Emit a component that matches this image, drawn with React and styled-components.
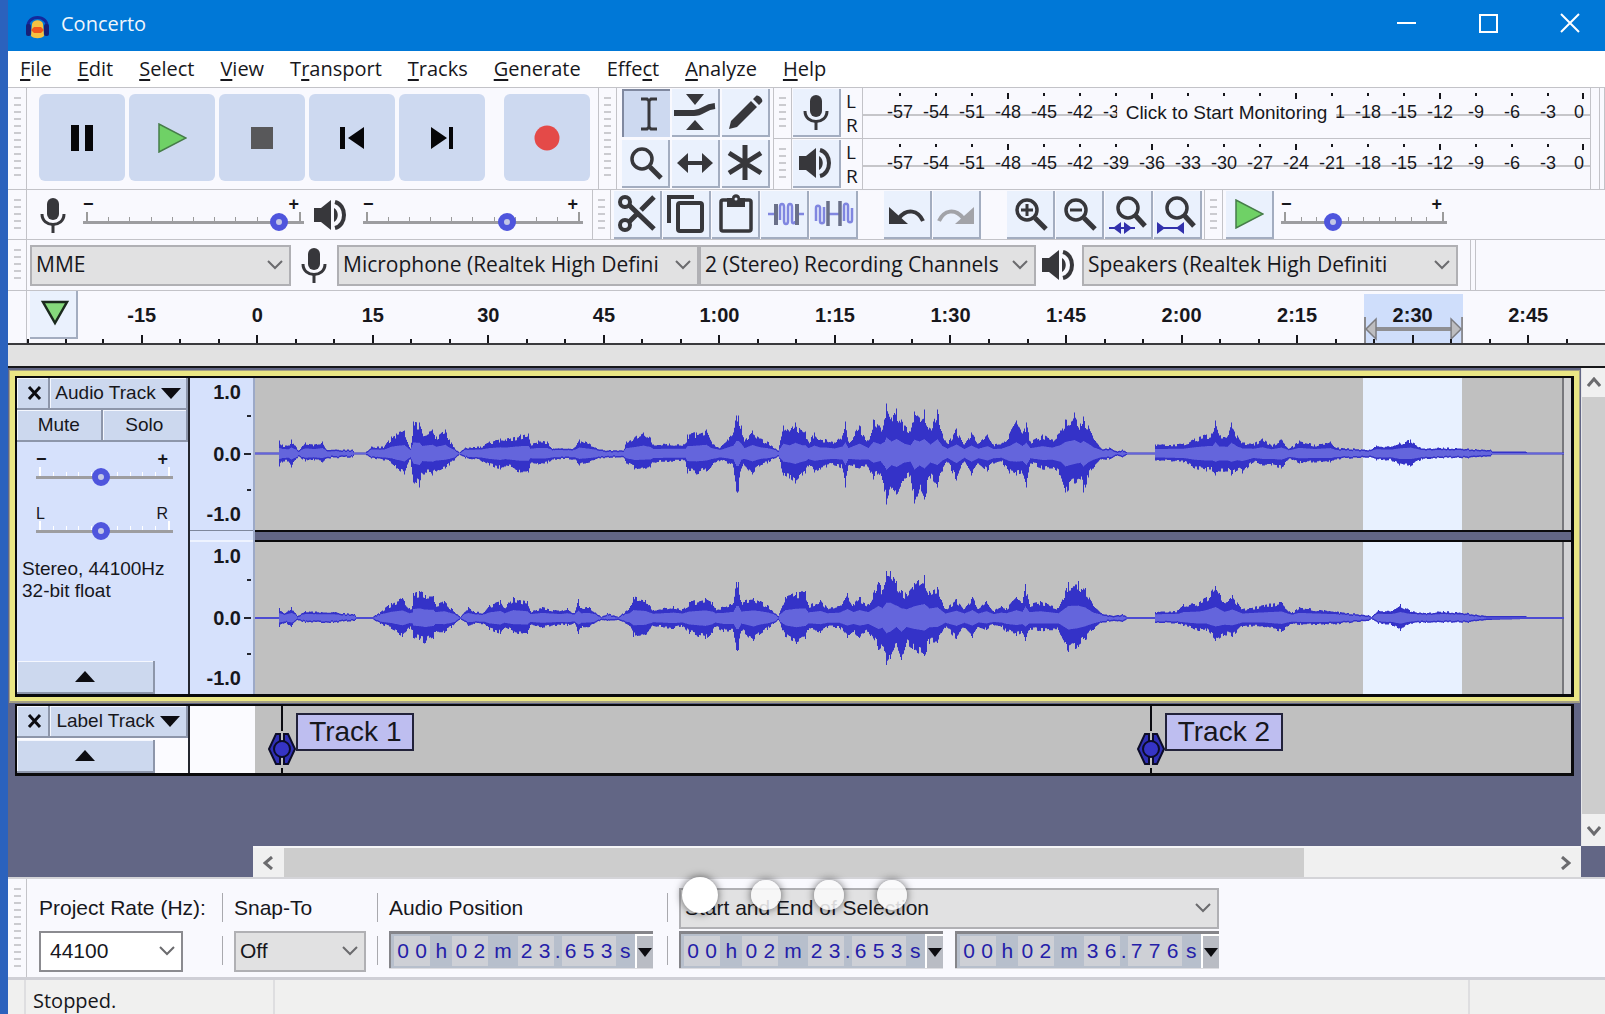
import React from 'react';
import styled, { createGlobalStyle, css } from 'styled-components';

const GlobalStyle = createGlobalStyle`
  * {
    box-sizing: border-box;
  }
  body {
    margin: 0;
    font-family: "Open Sans", "Noto Sans", sans-serif;
    font-size: 20px;
    color: #17171c;
  }
  button, select, input {
    margin: 0;
    font: inherit;
    color: inherit;
  }
`;

const arial = '"Liberation Sans", Arial, sans-serif';
const line = '#c3c3c8';
const ink = '#37373b';

/* ---------- window frame ---------- */

const Window = styled.div`
  display: flex;
  flex-direction: column;
  min-height: 100vh;
  overflow: hidden;
  border-left: 8px solid #2b62bd;
  background: #f9f9fe;
`;

const TitleBar = styled.header`
  display: flex;
  align-items: center;
  height: 51px;
  padding-left: 16px;
  background: #0078d7;
  color: #f0f6fc;
`;

const Title = styled.h1`
  flex: 1;
  margin: 0 0 4px 10px;
  font-size: 20px;
  font-weight: 400;
`;

const WindowButton = styled.button`
  width: 70px;
  height: 44px;
  margin-left: 12px;
  padding: 0;
  border: none;
  background: none;
`;

const MenuBar = styled.nav`
  display: flex;
  align-items: center;
  gap: 26px;
  height: 36px;
  padding-left: 12px;
  background: #fff;
`;

const MenuLink = styled.a`
  color: inherit;
  text-decoration: none;
  line-height: 32px;

  u {
    text-underline-offset: 3px;
  }
`;

/* ---------- toolbars ---------- */

const ToolbarRow = styled.div`
  display: flex;
  align-items: stretch;
  min-height: ${(props) => props.$height}px;
  border-top: 1px solid ${line};
`;

const Grip = styled.div`
  flex: none;
  display: flex;
  justify-content: center;
  width: 19px;
  padding: 9px 0;
  border-right: 1px solid ${line};
  border-left: ${(props) => (props.$edge ? '0' : `1px solid ${line}`)};

  &::before {
    content: "";
    width: 7px;
    background: repeating-linear-gradient(#cbcbd0 0 2px, transparent 2px 7px);
  }
`;

const Transport = styled.div`
  display: flex;
  align-items: center;
  gap: 4px;
  padding: 0 8px 2px 12px;
`;

const TransportButton = styled.button`
  display: grid;
  place-items: center;
  width: 86px;
  height: 87px;
  margin-left: ${(props) => (props.$apart ? '15px' : '0')};
  padding: 0;
  border: none;
  border-radius: 6px;
  background: #cdd9f0;
`;

const ToolGrid = styled.div`
  display: grid;
  grid-template-columns: repeat(3, 48px);
  align-content: center;
  gap: 3px 2px;
  padding: 0 3px 0 5px;
`;

const ToolButton = styled.button`
  flex: none;
  display: grid;
  place-items: center;
  width: 48px;
  height: 48px;
  padding: 0;
  border: 0 solid #a3adc0;
  border-width: 0 2px 2px 0;
  background: #eaf1fd;

  ${(props) =>
    props.$active &&
    css`
      border-color: #8089a0;
      border-width: 2px 0 0 2px;
      background: #cdd9f0;
    `}
`;

const Meters = styled.div`
  flex: 1;
  display: flex;
  flex-direction: column;
`;

const MeterRow = styled.div`
  flex: 1;
  display: flex;
  align-items: stretch;

  & + & {
    border-top: 1px solid ${line};
  }
  > ${ToolButton} {
    align-self: center;
    margin-left: 1px;
  }
`;

const Channels = styled.div`
  display: flex;
  flex-direction: column;
  justify-content: center;
  width: 21px;
  padding-left: 5px;
  font-size: 19px;
  line-height: 24px;
`;

const MeterBox = styled.button`
  position: relative;
  flex: 1;
  display: flex;
  align-items: flex-start;
  padding: 5px 6px 0 19px;
  border: 0 solid ${line};
  border-width: 0 1px;
  background: linear-gradient(#c6c6ca, #c6c6ca) center 26px / 100% 2px no-repeat;
  font-family: ${arial};
  font-size: 18px;
  line-height: 20px;
`;

const MeterMark = styled.span`
  flex: 2 0 0;
  display: flex;
  flex-direction: column;
  align-items: center;
  min-width: 0;

  &:last-child {
    flex: 1 0 0;
    align-items: flex-end;
  }

  &::before {
    content: "";
    width: 2px;
    height: ${(props) => (props.$major ? '6px' : '3px')};
    margin-bottom: ${(props) => (props.$major ? '3px' : '6px')};
    background: #17171c;
  }
`;

const MeterHint = styled.span`
  position: absolute;
  top: 12px;
  left: 50%;
  transform: translateX(-50%);
  padding: 3px 9px;
  background: #f9f9fe;
  font-size: 19px;
  white-space: nowrap;
`;

const RowEnd = styled.div`
  align-self: stretch;
  width: 6px;
  margin-left: ${(props) => props.$gap}px;
  border: 0 solid ${line};
  border-width: 0 1px;
`;

const MixerBar = styled.div`
  display: flex;
  align-items: center;
  padding: 0 9px 0 5px;
`;

const EditBar = styled.div`
  display: flex;
  align-items: center;
  gap: 1px;
  padding: 0 2px 0 3px;
`;

const Gap = styled.span`
  width: 24px;
`;

const SliderBox = styled.label`
  flex: none;
  display: flex;
  flex-direction: column;
  width: ${(props) => props.$width}px;
  margin: ${(props) => props.$margin || '0'};
  font-family: ${arial};
`;

const SliderEnds = styled.span`
  display: flex;
  justify-content: space-between;
  padding: 0 5px 0 0;
  font-size: ${(props) => (props.$light ? '16px' : '18px')};
  font-weight: ${(props) => (props.$light ? 400 : 700)};
  line-height: 15px;
`;

const SliderBody = styled.span`
  display: grid;
  align-items: center;

  > * {
    grid-area: 1 / 1;
  }
`;

const Ticks = styled.span`
  align-self: start;
  display: flex;
  justify-content: space-between;
  align-items: flex-end;
  height: 9px;
  padding: 0 3px;

  i {
    width: 1px;
    height: 4px;
    background: ${(props) => props.$color || '#9b9b9b'};
  }
  i:first-child, i:last-child {
    width: 2px;
    height: 9px;
  }
`;

const Range = styled.input`
  appearance: none;
  width: 100%;
  height: 20px;
  background: linear-gradient(#9d9da0, #9d9da0) center / 100% 3px no-repeat;

  &::-webkit-slider-thumb {
    appearance: none;
    width: 18px;
    height: 18px;
    border: 6px solid #4f55dd;
    border-radius: 50%;
    background: #c3c6e6;
  }
`;

const DeviceBar = styled.div`
  flex: 1;
  display: flex;
  align-items: center;
  padding-left: 3px;
`;

const DeviceIcon = styled.span`
  display: grid;
  place-items: center;
  width: ${(props) => props.$width || 46}px;
`;

const SelectBox = styled.span`
  flex: none;
  position: relative;
  display: block;
  width: ${(props) => props.$width};

  svg {
    position: absolute;
    top: 15px;
    right: 8px;
    pointer-events: none;
  }
`;

const SelectField = styled.select`
  appearance: none;
  display: block;
  width: 100%;
  height: 41px;
  padding: 0 28px 2px ${(props) => (props.$white ? '9px' : '4px')};
  border: 2px solid ${(props) => (props.$white ? '#8b8b90' : '#b0b0b4')};
  border-radius: 0;
  background: ${(props) => (props.$white ? '#fff' : '#e1e1e2')};
  font-family: ${(props) => (props.$arial ? arial : 'inherit')};
  font-size: 21px;
`;

/* ---------- timeline ---------- */

const Timeline = styled.div`
  display: flex;
  min-height: 55px;
  padding-right: 19px;
  border-top: 1px solid ${line};
  border-bottom: 2px solid #3a3a3d;
`;

const TimelineGutter = styled.div`
  width: 19px;
  border-right: 1px solid ${line};
`;

const TimeScale = styled.div`
  position: relative;
  flex: 1;
  display: flex;
`;

const TimeMark = styled.div`
  position: relative;
  flex: 1 0 0;
  display: flex;
  flex-direction: column;
  align-items: center;
  justify-content: space-between;
  padding-top: 12px;
  font: 700 20px/24px ${arial};
`;

const TimeTicks = styled.span`
  display: flex;
  justify-content: space-around;
  align-items: flex-end;
  width: 100%;

  i {
    width: 2px;
    height: 4px;
    background: #17171c;
  }
  i:nth-child(2) {
    height: 8px;
  }
`;

const TimelinePin = styled.div`
  display: flex;
  flex-direction: column;
  width: 57px;

  ${ToolButton} {
    margin-left: 3px;
  }
`;

const PinTicks = styled.span`
  display: flex;
  justify-content: space-between;
  width: 40px;

  i {
    width: 2px;
    height: 4px;
    background: #17171c;
  }
`;

const TimeSelection = styled.div`
  position: absolute;
  top: 3px;
  bottom: 0;
  left: 85.2%;
  width: 6.6%;
  background: #cfdefb;

  svg {
    position: absolute;
    left: 0;
    bottom: 0;
    width: 100%;
  }
`;

const Strip = styled.div`
  height: 23px;
  border-bottom: 2px solid #17171a;
  background: #e2e2e2;
`;

/* ---------- tracks ---------- */

const Workspace = styled.main`
  flex: 1;
  display: grid;
  grid-template-columns: 1fr 24px;
  grid-template-rows: 1fr 31px;
  background: #626685;
`;

const TrackList = styled.div`
  padding: 2px 1px 0;
`;

const TrackFrame = styled.section`
  padding: 5px 5px 4px;
  border: 1px solid ${(props) => (props.$selected ? '#a39f85' : 'transparent')};
  border-width: 1px 1px 2px;
  background: ${(props) => (props.$selected ? '#eae684' : 'transparent')};
  ${(props) => !props.$selected && 'padding-top: 0;'}
`;

const Track = styled.div`
  display: grid;
  grid-template-columns: 173px 65px 1fr;
  border: solid #0a0a0c;
  border-width: 2px 3px 3px 2px;
  background: #c0c0c0;
`;

const Panel = styled.div`
  display: flex;
  flex-direction: column;
  border-right: 2px solid #24262e;
  background: ${(props) => (props.$plain ? '#fbfbff' : '#d6e1fc')};
  font-family: ${arial};
  font-size: 19px;
`;

const PanelRow = styled.div`
  display: grid;
  grid-template-columns: ${(props) => props.$columns};
  height: 32px;
`;

const PanelButton = styled.button`
  display: flex;
  align-items: center;
  justify-content: center;
  gap: 5px;
  height: 32px;
  padding: 0;
  border: 0 solid #8d96aa;
  border-width: 0 2px 2px 0;
  background: #ccd8ee;
  box-shadow: inset 1px 1px #f4f7fe;
  white-space: nowrap;

  &[aria-label^="Close"] {
    padding-left: 4px;
  }
`;

const CollapseButton = styled(PanelButton)`
  width: 138px;
  height: 33px;
  margin-top: auto;
`;

const TrackInfo = styled.p`
  margin: 17px 0 0 5px;
  line-height: 22px;
`;

const PanelSliders = styled.div`
  display: flex;
  flex-direction: column;
  gap: 19px;
  padding: 10px 0 0 19px;
`;

const Rulers = styled.div`
  display: grid;
  grid-template-rows: 152px 12px 152px;
  background: #d6e1fc;
  border-right: 2px solid #9ca9c8;
`;

const LevelScale = styled.div`
  display: grid;
  grid-template-rows: 20px 28px 48px 24px 24px;
  align-items: center;
  justify-items: end;
  padding: 4px 2px 0 0;
  font: 700 20px/20px ${arial};

  i {
    width: 4px;
    height: 2px;
    background: #24262e;
  }
`;

const LevelLabel = styled.span`
  display: flex;
  align-items: center;
  padding-right: ${(props) => (props.$tick ? '0' : '10px')};

  &::after {
    content: "";
    display: ${(props) => (props.$tick ? 'block' : 'none')};
    width: 7px;
    height: 2px;
    margin-left: 3px;
    background: #24262e;
  }
`;

const RulerBreak = styled.div`
  border-top: 1px solid #7e879c;
  border-bottom: 2px solid #eef3ff;
`;

const Waves = styled.div`
  position: relative;
  display: grid;
  grid-template-rows: 152px 12px 152px;
`;

const WaveBreak = styled.div`
  z-index: 1;
  border: solid #0a0a0c;
  border-width: 2px 0;
  background: #626685;
`;

const WaveSelection = styled.div`
  position: absolute;
  top: 0;
  bottom: 0;
  left: 84.2%;
  width: 7.5%;
  background: #e8f1ff;
`;

const WaveSvg = styled.svg`
  position: relative;
  width: 100%;
  height: 152px;
`;

const LabelHead = styled.div`
  background: #fbfbff;
`;

const LabelCanvas = styled.div`
  position: relative;
  height: 67px;
`;

const Marker = styled.div`
  position: absolute;
  top: 0;
  left: ${(props) => props.$at};
  display: flex;
  align-items: flex-start;

  svg {
    flex: none;
  }
`;

const MarkerText = styled.span`
  height: 38px;
  margin-top: 7px;
  padding: 0 11px;
  border: 2px solid #22223a;
  background: #bebef0;
  font: 28px/33px ${arial};
`;

/* ---------- scrollbars ---------- */

const ScrollColumn = styled.div`
  display: flex;
  flex-direction: column;
  border-left: 1px solid #e6e6e8;
  background: #cdcdcd;
`;

const ScrollRow = styled.div`
  display: flex;
  margin-left: 245px;
  border-top: 2px solid #f5f5f7;
  background: #f0f0f0;
`;

const ScrollButton = styled.button`
  flex: none;
  display: grid;
  place-items: center;
  width: ${(props) => props.$width}px;
  height: ${(props) => props.$height}px;
  padding: 0;
  border: none;
  background: #f0f0f0;
`;

const ScrollThumb = styled.div`
  flex: ${(props) => props.$flex};
  background: ${(props) => (props.$rest ? 'transparent' : '#cdcdcd')};
`;

/* ---------- selection bar, status bar ---------- */

const SelectionBar = styled.div`
  position: relative;
  display: flex;
  min-height: 103px;
  border-top: 2px solid #d4d4d8;
  border-bottom: 3px solid #cfcfd6;
`;

const SelectionGroups = styled.div`
  display: flex;
  gap: 11px;
  padding: 9px 0 0 12px;
`;

const Group = styled.div`
  display: grid;
  grid-template-rows: 41px 41px;
  row-gap: 2px;
  width: ${(props) => props.$width}px;
  font-family: ${arial};
  font-size: 21px;
`;

const GroupLabel = styled.label`
  align-self: center;
  padding-bottom: 2px;
  white-space: nowrap;
`;

const Divider = styled.div`
  display: grid;
  grid-template-rows: 29px 29px;
  gap: 14px;
  padding-top: 5px;

  i {
    width: 1px;
    background: #a9a9ae;
  }
`;

const TimePair = styled.div`
  display: flex;
  gap: 12px;
`;

const TimeBox = styled.div`
  display: flex;
  flex: none;
  width: 264px;
  height: 37px;
  padding-left: 3px;
  border: solid #85858a;
  border-width: 3px 0 0 2px;
  background: #b7bfcc;
  box-shadow: 0 1px #dcdce0;
  color: #2420a8;
  line-height: 34px;
`;

const Digits = styled.span`
  display: flex;
  margin: 2px 0;
  background: #ced0d6;
  line-height: 30px;

  span {
    width: 18px;
    text-align: center;
  }
`;

const Unit = styled.span`
  flex: ${(props) => props.$grow} 0 0;
  text-align: center;
`;

const TimeMenu = styled.button`
  width: 18px;
  padding: 0;
  border: solid #fff;
  border-width: 2px 0 0 2px;
  background: #b9bcc4;
  line-height: 0;
`;

const Pager = styled.div`
  position: absolute;
  top: -2px;
  left: 42.2%;
  display: flex;
  align-items: center;
  gap: 33px;
`;

const PagerDot = styled.button`
  width: ${(props) => (props.$current ? 36 : 30)}px;
  height: ${(props) => (props.$current ? 36 : 30)}px;
  padding: 0;
  border: none;
  border-radius: 50%;
  background: ${(props) => (props.$current ? '#fff' : 'rgba(250, 250, 250, 0.85)')};
  box-shadow: 0 0 9px rgba(0, 0, 0, 0.6);
`;

const StatusBar = styled.footer`
  display: grid;
  grid-template-columns: 17px 250px 1fr 135px;
  height: 34px;
  background: #f0f0ef;

  > * {
    padding: 8px 8px 0;
    border-right: 2px solid #dedee0;
    line-height: 26px;
  }
  > :last-child {
    border: none;
  }
`;

/* ---------- icons ---------- */

const MicIcon = () => (
  <svg width="28" height="38" viewBox="0 0 28 38" fill="none" stroke={ink}>
    <rect x="8" y="2" width="12" height="22" rx="6" fill={ink} stroke="none" />
    <path d="M3 18c0 14 22 14 22 0" strokeWidth="3" />
    <path d="M14 28v9" strokeWidth="3" />
  </svg>
);

const SpeakerIcon = () => (
  <svg width="36" height="34" viewBox="0 0 36 34" fill="none" stroke={ink}>
    <path d="M1 10h7L18 2v30L8 24H1z" fill={ink} stroke="none" />
    <path d="M21 10c5 3 5 11 0 14z" fill={ink} stroke="none" />
    <path d="M22 4c12 3 12 23 0 26" strokeWidth="4" />
  </svg>
);

const PlayIcon = () => (
  <svg width="30" height="30" viewBox="0 0 30 30">
    <path d="M2 1v28l27-14z" fill="#6fd166" stroke="#467c49" strokeWidth="1.5" />
  </svg>
);

const Chevron = ({ d = 'M1 1l7 7 7-7', w = 16, h = 10, stroke = '#6b6b6e', width = 2 }) => (
  <svg width={w} height={h} viewBox={`0 0 ${w} ${h}`} fill="none" stroke={stroke} strokeWidth={width}>
    <path d={d} />
  </svg>
);

const Triangle = ({ d = 'M0 0h20L10 11z', w = 20, h = 11 }) => (
  <svg width={w} height={h} viewBox={`0 0 ${w} ${h}`}>
    <path d={d} fill="#0c0c10" />
  </svg>
);

const Icon = ({ children, color = ink }) => (
  <svg width="42" height="42" viewBox="0 0 42 42" fill="none" stroke={color} strokeWidth="4">
    {children}
  </svg>
);

const Lens = ({ children, small }) => (
  <Icon>
    <circle cx={small ? 21 : 18} cy={small ? 15 : 17} r="10" strokeWidth="3.5" />
    <path d={small ? 'M28 22l10 11' : 'M26 25l11 11'} strokeWidth="5" />
    {children}
  </Icon>
);

const tools = [
  ['Selection tool', (
    <Icon>
      <path d="M15 6h6l2 2 2-2h6M15 36h6l2-2 2 2h6M23 7v28" strokeWidth="3" />
    </Icon>
  )],
  ['Envelope tool', (
    <Icon>
      <path d="M12 3h18l-9 11zM12 39h18l-9-10z" fill={ink} stroke="none" />
      <path d="M0 22h20c9 0 10-6 21-7" strokeWidth="6" />
    </Icon>
  )],
  ['Draw tool', (
    <Icon>
      <path d="M5 38l2-8L27 10l6 6L13 36zM29 8l3-3c2-2 8 4 6 6l-3 3z" fill={ink} stroke="none" />
    </Icon>
  )],
  ['Zoom tool', <Lens />],
  ['Time shift tool', (
    <Icon>
      <path d="M10 21h22" />
      <path d="M3 21l11-10v20zM39 21L28 11v20z" fill={ink} stroke="none" />
    </Icon>
  )],
  ['Multi tool', (
    <Icon>
      <path d="M21 3v35M5 11l32 20M37 11L5 31" strokeWidth="5" />
    </Icon>
  )],
];

const editTools = [
  ['Cut', (
    <Icon>
      <circle cx="9" cy="9" r="5" strokeWidth="4" />
      <circle cx="9" cy="32" r="5" strokeWidth="4" />
      <path d="M13 12l25 24M13 29l8-8M25 17L38 4" strokeWidth="5" />
    </Icon>
  )],
  ['Copy', (
    <Icon>
      <rect x="13" y="10" width="24" height="28" rx="2" />
      <path d="M4 30V4h25" />
    </Icon>
  )],
  ['Paste', (
    <Icon>
      <rect x="7" y="7" width="30" height="31" rx="2" strokeWidth="3.5" />
      <path d="M13 5h5c0-5 8-5 8 0h5v9H13z" fill={ink} stroke="none" />
      <circle cx="22" cy="6" r="1.5" fill="#eaf1fd" stroke="none" />
    </Icon>
  )],
  ['Trim audio', (
    <Icon color="#8086e0">
      <path d="M5 21h6M35 21h6M17 27V14c0-4 4-4 4 0v14c0 4 4 4 4 0V14c0-4 4-4 4 0v14c0 3 3 3 3 0" strokeWidth="2.5" />
      <path d="M13 11v21M34 11v21" stroke="#6a7088" />
    </Icon>
  )],
  ['Silence audio', (
    <Icon color="#8086e0">
      <path d="M4 28V15c0-3 4-3 4 0v13c0 3 4 3 4 0V14M17 21h10M32 28V13c0-3 4-3 4 0v14c0 3 4 3 4 0V15" strokeWidth="2.5" />
      <path d="M16 8v25M28 8v25" stroke="#6a7088" strokeWidth="3.5" />
    </Icon>
  )],
];

const historyTools = [
  ['Undo', (
    <Icon>
      <path d="M13 25c8-10 19-8 24 3" strokeWidth="4" />
      <path d="M3 14v17h19z" fill={ink} stroke="none" />
    </Icon>
  )],
  ['Redo', (
    <Icon color="#a2a3a8">
      <path d="M28 25c-8-10-19-8-24 3" strokeWidth="4" />
      <path d="M39 14v17H20z" fill="#a2a3a8" stroke="none" />
    </Icon>
  )],
];

const zoomTools = [
  ['Zoom in', (
    <Lens>
      <path d="M12 17h12M18 11v12" strokeWidth="3" />
    </Lens>
  )],
  ['Zoom out', (
    <Lens>
      <path d="M12 17h12" strokeWidth="3" />
    </Lens>
  )],
  ['Fit selection', (
    <Lens small>
      <path d="M2 35h26" stroke="#3231ac" strokeWidth="2" />
      <path d="M6 35l8-6v12zM25 35l-8-6v12z" fill="#3231ac" stroke="none" />
    </Lens>
  )],
  ['Fit project', (
    <Lens small>
      <path d="M2 35h25" stroke="#3231ac" strokeWidth="2" />
      <path d="M9 35l-8-6v12zM20 35l8-6v12z" fill="#3231ac" stroke="none" />
    </Lens>
  )],
];

const transport = [
  ['Pause', <svg width="24" height="26"><path d="M1 0h8v26H1zM15 0h8v26h-8z" fill="#060608" /></svg>],
  ['Play', <PlayIcon />],
  ['Stop', <svg width="22" height="22"><path d="M0 0h22v22H0z" fill="#58585a" /></svg>],
  ['Skip to start', <svg width="24" height="24"><path d="M0 1h5v22H0zM24 1v22L8 12z" fill="#060608" /></svg>],
  ['Skip to end', <svg width="24" height="24"><path d="M19 1h4v22h-4zM1 1v22l16-11z" fill="#060608" /></svg>],
  ['Record', <svg width="26" height="26"><circle cx="13" cy="13" r="12.5" fill="#e44a48" /></svg>],
];

/* ---------- waveform ---------- */

const waveStart = 254;
const waveWidth = 1316;

// [x, level above the centre line, level below it]
const leftChannel = [
  [254, 1, 1], [277, 1, 1], [278, 13, 13], [281, 9, 9], [287, 8, 8], [290, 14, 14], [297, 3, 3], [304, 11, 8], [313, 9, 7],
  [321, 12, 9], [325, 4, 5], [351, 4, 4], [353, 1, 1], [364, 1, 1], [370, 7, 5], [383, 7, 7], [390, 17, 10], [395, 20, 15],
  [403, 23, 21], [409, 5, 6], [412, 32, 29], [418, 31, 34], [421, 20, 20], [431, 24, 22], [435, 17, 18], [444, 24, 15],
  [448, 14, 12], [453, 6, 7], [458, 1, 1], [464, 6, 5], [479, 7, 7], [488, 12, 12], [499, 15, 16], [504, 14, 13],
  [519, 19, 19], [527, 20, 19], [529, 10, 10], [537, 13, 11], [546, 12, 10], [552, 5, 6], [573, 6, 6], [578, 14, 12],
  [588, 10, 9], [599, 4, 5], [622, 3, 4], [625, 12, 10], [633, 16, 16], [642, 21, 15], [649, 16, 14], [652, 9, 9],
  [668, 10, 8], [684, 10, 8], [686, 19, 20], [695, 21, 21], [705, 24, 18], [710, 12, 13], [719, 6, 7], [726, 14, 10],
  [732, 21, 14], [735, 38, 38], [737, 38, 38], [740, 28, 15], [743, 12, 12], [751, 23, 21], [759, 15, 12], [766, 12, 10],
  [777, 3, 3], [782, 28, 22], [788, 22, 25], [794, 31, 30], [801, 22, 22], [804, 22, 20], [807, 12, 13], [813, 21, 19],
  [819, 14, 16], [825, 14, 14], [833, 11, 12], [841, 18, 15], [844, 32, 34], [847, 12, 12], [858, 28, 15], [867, 13, 14],
  [872, 34, 26], [879, 26, 20], [883, 34, 38], [885, 50, 51], [890, 36, 35], [895, 45, 41], [903, 28, 25], [909, 22, 22],
  [913, 42, 50], [918, 36, 36], [923, 44, 46], [929, 25, 25], [936, 44, 34], [941, 20, 18], [946, 10, 9], [955, 25, 27],
  [963, 9, 8], [970, 21, 22], [977, 10, 10], [986, 19, 18], [992, 9, 10], [1000, 10, 8], [1008, 20, 20], [1015, 33, 22],
  [1021, 20, 20], [1025, 31, 34], [1029, 12, 10], [1041, 19, 16], [1051, 14, 15], [1059, 23, 22], [1064, 34, 39],
  [1073, 41, 30], [1079, 30, 26], [1082, 37, 39], [1087, 28, 24], [1092, 15, 15], [1100, 5, 6], [1108, 6, 6], [1116, 2, 2],
  [1121, 4, 4], [1126, 1, 1], [1153, 1, 1], [1154, 9, 7], [1182, 10, 9], [1193, 15, 15], [1205, 19, 18], [1211, 20, 18],
  [1214, 33, 22], [1218, 18, 18], [1226, 17, 18], [1230, 31, 22], [1236, 18, 17], [1241, 11, 20], [1252, 10, 9],
  [1261, 15, 12], [1270, 8, 12], [1280, 14, 15], [1288, 5, 5], [1298, 13, 10], [1313, 9, 9], [1329, 12, 9], [1334, 6, 6],
  [1370, 4, 4], [1375, 8, 7], [1390, 7, 7], [1398, 11, 12], [1409, 14, 13], [1421, 5, 6], [1442, 6, 5], [1467, 5, 5],
  [1489, 4, 3], [1491, 2, 1], [1524, 2, 1], [1526, 1, 1], [1562, 1, 1],
];

const rightChannel = [
  [254, 1, 1], [277, 1, 1], [278, 10, 9], [284, 5, 5], [290, 11, 9], [296, 2, 2], [304, 7, 5], [332, 6, 5], [353, 4, 3],
  [355, 1, 1], [371, 1, 1], [379, 6, 6], [390, 15, 11], [401, 20, 19], [408, 10, 11], [411, 12, 12], [412, 25, 20],
  [418, 27, 22], [424, 23, 25], [432, 22, 21], [434, 14, 14], [443, 17, 15], [450, 10, 10], [459, 1, 1], [467, 11, 8],
  [473, 6, 6], [483, 6, 6], [488, 13, 12], [499, 18, 16], [503, 10, 10], [512, 21, 15], [526, 17, 16], [529, 7, 7],
  [541, 11, 10], [559, 7, 7], [566, 10, 8], [573, 5, 5], [577, 19, 16], [580, 10, 10], [588, 11, 9], [600, 1, 2],
  [606, 5, 3], [617, 1, 2], [628, 10, 8], [632, 21, 19], [644, 18, 17], [652, 8, 8], [672, 12, 11], [681, 9, 9],
  [688, 16, 16], [704, 20, 21], [711, 16, 15], [714, 10, 9], [722, 11, 14], [732, 15, 14], [735, 36, 32], [737, 36, 32],
  [740, 16, 13], [752, 20, 23], [759, 17, 16], [766, 13, 12], [777, 2, 2], [784, 21, 19], [795, 26, 26], [804, 27, 21],
  [807, 13, 12], [819, 18, 15], [826, 10, 10], [838, 12, 10], [846, 25, 20], [852, 14, 14], [858, 21, 20], [867, 14, 14],
  [877, 36, 32], [881, 28, 28], [885, 47, 47], [889, 47, 41], [895, 37, 25], [900, 28, 42], [905, 24, 25], [913, 35, 32],
  [923, 43, 38], [928, 27, 26], [936, 31, 25], [944, 9, 10], [955, 19, 21], [963, 9, 10], [971, 21, 20], [977, 9, 9],
  [985, 17, 12], [992, 7, 7], [1000, 12, 9], [1005, 10, 14], [1015, 21, 18], [1021, 15, 15], [1024, 34, 23],
  [1028, 14, 12], [1039, 17, 13], [1057, 10, 12], [1067, 36, 34], [1077, 37, 29], [1084, 30, 22], [1092, 12, 12],
  [1100, 5, 5], [1112, 2, 3], [1121, 4, 4], [1126, 1, 1], [1153, 1, 1], [1154, 6, 5], [1177, 8, 6], [1182, 14, 8],
  [1198, 16, 13], [1205, 21, 13], [1214, 32, 23], [1223, 15, 17], [1231, 23, 19], [1241, 9, 9], [1262, 13, 9],
  [1280, 16, 14], [1290, 5, 6], [1298, 11, 7], [1323, 8, 7], [1339, 6, 6], [1367, 3, 3], [1370, 1, 1], [1377, 8, 6],
  [1390, 7, 7], [1399, 14, 13], [1408, 8, 6], [1424, 5, 5], [1442, 7, 5], [1467, 5, 5], [1485, 2, 2], [1524, 2, 1],
  [1526, 1, 1], [1562, 1, 1],
];

const jitter = (n) => {
  const v = Math.sin(n * 127.1 + 11.7) * 43758.5453;
  return v - Math.floor(v);
};

const buildWave = (points, centre) => {
  const top = [];
  const bottom = [];
  const innerTop = [];
  const innerBottom = [];
  let k = 0;
  for (let x = waveStart; x <= 1562; x += 1) {
    while (k < points.length - 2 && points[k + 1][0] <= x) k += 1;
    const [x0, up0, down0] = points[k];
    const [x1, up1, down1] = points[k + 1];
    const t = (x - x0) / (x1 - x0);
    const rawUp = up0 + (up1 - up0) * t;
    const rawDown = down0 + (down1 - down0) * t;
    const steady = rawUp < 3 || x === x0;
    // bars come in steps of two pixels
    const step = Math.floor(x / 2);
    const up = steady ? rawUp : rawUp * (0.74 + 0.3 * jitter(step));
    const down = steady ? rawDown : rawDown * (0.74 + 0.3 * jitter(step + 4000));
    const rmsUp = Math.max(0.4, Math.min(up - 1.5, 2 + rawUp * 0.28));
    const rmsDown = Math.max(0.4, Math.min(down - 1.5, 2 + rawDown * 0.28));
    const px = x - waveStart;
    top.push(`${px},${(centre - up).toFixed(1)}H${px + 1}`);
    bottom.unshift(`${px + 1},${(centre + down).toFixed(1)}H${px}`);
    innerTop.push(`${px},${(centre - rmsUp).toFixed(1)}H${px + 1}`);
    innerBottom.unshift(`${px + 1},${(centre + rmsDown).toFixed(1)}H${px}`);
  }
  return {
    peaks: `M${[...top, ...bottom].join('L')}Z`,
    rms: `M${[...innerTop, ...innerBottom].join('L')}Z`,
  };
};

const waves = [buildWave(leftChannel, 75.5), buildWave(rightChannel, 76)];

const Wave = ({ wave, label }) => (
  <WaveSvg viewBox={`0 0 ${waveWidth} 152`} preserveAspectRatio="none" role="img" aria-label={label}>
    <path d="M1309 0h7v152h-7z" fill="#d2d2d4" />
    <path d="M1308 0v152" stroke="#77777c" strokeWidth="2" />
    <path d={wave.peaks} fill="#3432c8" />
    <path d={wave.rms} fill="#6465dc" />
  </WaveSvg>
);

/* ---------- parts ---------- */

const Slider = ({ label, width, value, margin, low = '−', high = '+', light, tickColor }) => (
  <SliderBox $width={width} $margin={margin}>
    <SliderEnds $light={light}>
      <span>{low}</span>
      <span>{high}</span>
    </SliderEnds>
    <SliderBody>
      <Ticks $color={tickColor}>
        {Array.from({ length: 11 }, (_, i) => <i key={i} />)}
      </Ticks>
      <Range type="range" aria-label={label} defaultValue={value} />
    </SliderBody>
  </SliderBox>
);

const Select = ({ id, label, width = '100%', value, white, arialFont }) => (
  <SelectBox $width={width}>
    <SelectField id={id} aria-label={label} $white={white} $arial={arialFont}>
      <option>{value}</option>
    </SelectField>
    <Chevron />
  </SelectBox>
);

const ToolButtons = ({ items, active }) =>
  items.map(([name, icon]) => (
    <ToolButton key={name} type="button" aria-label={name} $active={name === active}>
      {icon}
    </ToolButton>
  ));

const marks = Array.from({ length: 20 }, (_, i) => i * 3 - 57);

// the hint covers the middle of the scale, so those marks carry no number
const Meter = ({ name, icon, hint }) => (
  <MeterRow>
    <Grip />
    <ToolButton type="button" aria-label={name}>{icon}</ToolButton>
    <Channels>
      <span>L</span>
      <span>R</span>
    </Channels>
    <MeterBox type="button">
      {hint && <MeterHint>{hint}</MeterHint>}
      {marks.map((mark) => (
        <MeterMark key={mark} $major={mark % 12 === 0}>
          {hint && mark > -39 && mark < -21 ? null : mark}
        </MeterMark>
      ))}
    </MeterBox>
  </MeterRow>
);

const TimeField = ({ label, h, m, s, ms }) => (
  <TimeBox role="group" aria-label={label}>
    <Digits>{[...h].map((d, i) => <span key={i}>{d}</span>)}</Digits>
    <Unit $grow={23}>h</Unit>
    <Digits>{[...m].map((d, i) => <span key={i}>{d}</span>)}</Digits>
    <Unit $grow={30}>m</Unit>
    <Digits>{[...s].map((d, i) => <span key={i}>{d}</span>)}</Digits>
    <Unit $grow={8}>.</Unit>
    <Digits>{[...ms].map((d, i) => <span key={i}>{d}</span>)}</Digits>
    <Unit $grow={20}>s</Unit>
    <TimeMenu type="button" aria-label={`${label} format`}>
      <Triangle d="M0 0h14L7 9z" w={14} h={9} />
    </TimeMenu>
  </TimeBox>
);

const Levels = () => (
  <LevelScale>
    <LevelLabel>1.0</LevelLabel>
    <i />
    <LevelLabel $tick>0.0</LevelLabel>
    <i />
    <LevelLabel>-1.0</LevelLabel>
  </LevelScale>
);

const LabelMarker = ({ at, text }) => (
  <Marker $at={at}>
    <svg width="28" height="67" viewBox="0 0 28 67">
      <path d="M14 0v25M14 62v5" stroke="#0c0c10" strokeWidth="2" />
      <path d="M8 28h4v30H8L1 43zM20 28h-4v30h4l7-15z" fill="#2f2fb4" stroke="#0c0c28" strokeWidth="2" />
      <circle cx="14" cy="43" r="8" fill="#3634c6" stroke="#0c0c28" strokeWidth="2" />
    </svg>
    <MarkerText>{text}</MarkerText>
  </Marker>
);

const TrackHead = ({ name }) => (
  <PanelRow $columns="33px 1fr">
    <PanelButton type="button" aria-label={`Close ${name}`}>
      <Chevron d="M2 2l11 12M13 2L2 14" w={15} h={16} stroke="#0c0c10" width={3} />
    </PanelButton>
    <PanelButton type="button">
      {name}
      <Triangle />
    </PanelButton>
  </PanelRow>
);

const menus = [
  ['', 'F', 'ile'], ['', 'E', 'dit'], ['', 'S', 'elect'], ['', 'V', 'iew'], ['T', 'r', 'ansport'],
  ['', 'T', 'racks'], ['', 'G', 'enerate'], ['Effe', 'c', 't'], ['', 'A', 'nalyze'], ['', 'H', 'elp'],
];

const times = ['-15', '0', '15', '30', '45', '1:00', '1:15', '1:30', '1:45', '2:00', '2:15', '2:30', '2:45'];

const App = () => (
  <Window>
    <GlobalStyle />
    <TitleBar>
      <svg width="27" height="28" viewBox="0 0 27 28">
        <path d="M4 16C2 2 25 2 23 16" fill="none" stroke="#13299c" strokeWidth="3" />
        <path d="M8 12c1-5 10-5 11 0l1 12c-3 3-10 3-13 0z" fill="#f5c242" />
        <path d="M7 18l3-3h7l3 3-3 3h-7z" fill="#f0561d" />
        <rect x="2" y="12" width="5" height="12" rx="2" fill="#172078" />
        <rect x="20" y="12" width="5" height="12" rx="2" fill="#172078" />
      </svg>
      <Title>Concerto</Title>
      <WindowButton type="button" aria-label="Minimize">
        <Chevron d="M0 10h19" w={19} h={20} stroke="#fff" />
      </WindowButton>
      <WindowButton type="button" aria-label="Maximize">
        <Chevron d="M1 1h17v17H1z" w={19} h={19} stroke="#fff" />
      </WindowButton>
      <WindowButton type="button" aria-label="Close">
        <Chevron d="M1 1l18 18M19 1L1 19" w={20} h={20} stroke="#fff" />
      </WindowButton>
    </TitleBar>
    <MenuBar>
      {menus.map(([before, key, after]) => (
        <MenuLink key={before + key + after} href="#">{before}<u>{key}</u>{after}</MenuLink>
      ))}
    </MenuBar>

    <ToolbarRow $height={102}>
      <Grip $edge />
      <Transport>
        {transport.map(([name, icon]) => (
          <TransportButton key={name} type="button" aria-label={name} $apart={name === 'Record'}>
            {icon}
          </TransportButton>
        ))}
      </Transport>
      <Grip />
      <ToolGrid>
        <ToolButtons items={tools} active="Selection tool" />
      </ToolGrid>
      <Meters>
        <Meter name="Recording meter" icon={<MicIcon />} hint="Click to Start Monitoring" />
        <Meter name="Playback meter" icon={<SpeakerIcon />} />
      </Meters>
      <RowEnd $gap={8} />
    </ToolbarRow>

    <ToolbarRow $height={50}>
      <Grip $edge />
      <MixerBar>
        <DeviceIcon $width={42}><MicIcon /></DeviceIcon>
        <Slider label="Recording volume" width={221} value={92} margin="0 9px 0 9px" />
        <SpeakerIcon />
        <Slider label="Playback volume" width={220} value={67} margin="0 0 0 14px" />
      </MixerBar>
      <Grip />
      <EditBar>
        <ToolButtons items={editTools} />
        <Gap />
        <ToolButtons items={historyTools} />
        <Gap />
        <ToolButtons items={zoomTools} />
      </EditBar>
      <Grip />
      <EditBar>
        <ToolButtons items={[['Play at speed', <PlayIcon />]]} />
        <Slider label="Playback speed" width={166} value={29} margin="0 0 0 6px" />
      </EditBar>
    </ToolbarRow>

    <ToolbarRow $height={51}>
      <Grip $edge />
      <DeviceBar>
        <Select label="Audio host" width="261px" value="MME" />
        <DeviceIcon><MicIcon /></DeviceIcon>
        <Select label="Recording device" width="362px" value="Microphone (Realtek High Defini" />
        <Select label="Recording channels" width="337px" value="2 (Stereo) Recording Channels" />
        <DeviceIcon><SpeakerIcon /></DeviceIcon>
        <Select label="Playback device" width="376px" value="Speakers (Realtek High Definiti" />
        <RowEnd $gap={12} />
      </DeviceBar>
    </ToolbarRow>

    <Timeline>
      <TimelineGutter />
      <TimelinePin>
        <ToolButton type="button" aria-label="Pinned play head">
          <svg width="34" height="30" viewBox="0 0 34 30">
            <path d="M7 3h24L19 24z" fill="#86d97c" stroke="#1b2a1d" strokeWidth="2.5" />
          </svg>
        </ToolButton>
        <PinTicks><i /><i /></PinTicks>
      </TimelinePin>
      <TimeScale>
        <TimeSelection>
          <svg height="30" viewBox="0 0 99 30" preserveAspectRatio="none">
            <path d="M1 4v26M98 4v26" stroke="#8a8a8e" strokeWidth="2" />
            <path d="M8 16h83" stroke="#8f8f93" strokeWidth="4" />
            <path d="M2 16l10-10v20zM97 16L87 6v20z" fill="#bdbdc0" stroke="#7c7c80" strokeWidth="1.5" />
          </svg>
        </TimeSelection>
        {times.map((time) => (
          <TimeMark key={time}>
            {time}
            <TimeTicks><i /><i /><i /></TimeTicks>
          </TimeMark>
        ))}
      </TimeScale>
    </Timeline>
    <Strip />

    <Workspace>
      <TrackList>
        <TrackFrame $selected>
          <Track>
            <Panel>
              <TrackHead name="Audio Track" />
              <PanelRow $columns="1fr 1fr">
                <PanelButton type="button">Mute</PanelButton>
                <PanelButton type="button">Solo</PanelButton>
              </PanelRow>
              <PanelSliders>
                <Slider label="Gain" width={137} value={47} tickColor="#fff" />
                <Slider label="Pan" width={137} value={47} tickColor="#fff" low="L" high="R" light />
              </PanelSliders>
              <TrackInfo>
                Stereo, 44100Hz
                <br />
                32-bit float
              </TrackInfo>
              <CollapseButton type="button" aria-label="Collapse Audio Track">
                <Triangle d="M0 11h20L10 0z" />
              </CollapseButton>
            </Panel>
            <Rulers>
              <Levels />
              <RulerBreak />
              <Levels />
            </Rulers>
            <Waves>
              <WaveSelection />
              <Wave wave={waves[0]} label="Left channel" />
              <WaveBreak />
              <Wave wave={waves[1]} label="Right channel" />
            </Waves>
          </Track>
        </TrackFrame>
        <TrackFrame>
          <Track>
            <Panel $plain>
              <TrackHead name="Label Track" />
              <CollapseButton type="button" aria-label="Collapse Label Track">
                <Triangle d="M0 11h20L10 0z" />
              </CollapseButton>
            </Panel>
            <LabelHead />
            <LabelCanvas>
              <LabelMarker at="1%" text="Track 1" />
              <LabelMarker at="67%" text="Track 2" />
            </LabelCanvas>
          </Track>
        </TrackFrame>
      </TrackList>
      <ScrollColumn>
        <ScrollButton type="button" aria-label="Scroll up" $width={23} $height={29}>
          <Chevron d="M1 9l6-7 6 7" w={14} h={11} width={3} />
        </ScrollButton>
        <ScrollThumb $flex={1} />
        <ScrollButton type="button" aria-label="Scroll down" $width={23} $height={32}>
          <Chevron d="M1 2l6 7 6-7" w={14} h={11} width={3} />
        </ScrollButton>
      </ScrollColumn>
      <ScrollRow>
        <ScrollButton type="button" aria-label="Scroll left" $width={31} $height={29}>
          <Chevron d="M9 1L2 7l7 6" w={11} h={14} width={3} />
        </ScrollButton>
        <ScrollThumb $flex={1019} />
        <ScrollThumb $flex={246} $rest />
        <ScrollButton type="button" aria-label="Scroll right" $width={31} $height={29}>
          <Chevron d="M2 1l7 6-7 6" w={11} h={14} width={3} />
        </ScrollButton>
      </ScrollRow>
    </Workspace>

    <SelectionBar>
      <Grip $edge />
      <SelectionGroups>
        <Group $width={172}>
          <GroupLabel htmlFor="rate">Project Rate (Hz):</GroupLabel>
          <Select id="rate" width="144px" value="44100" white arialFont />
        </Group>
        <Divider><i /><i /></Divider>
        <Group $width={132}>
          <GroupLabel htmlFor="snap">Snap-To</GroupLabel>
          <Select id="snap" value="Off" arialFont />
        </Group>
        <Divider><i /><i /></Divider>
        <Group $width={267}>
          <GroupLabel as="span">Audio Position</GroupLabel>
          <TimeField label="Audio Position" h="00" m="02" s="23" ms="653" />
        </Group>
        <Divider><i /><i /></Divider>
        <Group $width={540}>
          <Select label="Selection type" value="Start and End of Selection" arialFont />
          <TimePair>
            <TimeField label="Selection start" h="00" m="02" s="23" ms="653" />
            <TimeField label="Selection end" h="00" m="02" s="36" ms="776" />
          </TimePair>
        </Group>
      </SelectionGroups>
      <Pager>
        <PagerDot type="button" aria-label="Slide 1" $current />
        <PagerDot type="button" aria-label="Slide 2" />
        <PagerDot type="button" aria-label="Slide 3" />
        <PagerDot type="button" aria-label="Slide 4" />
      </Pager>
    </SelectionBar>
    <StatusBar>
      <span />
      <span>Stopped.</span>
      <span />
      <span />
    </StatusBar>
  </Window>
);

export default App;
